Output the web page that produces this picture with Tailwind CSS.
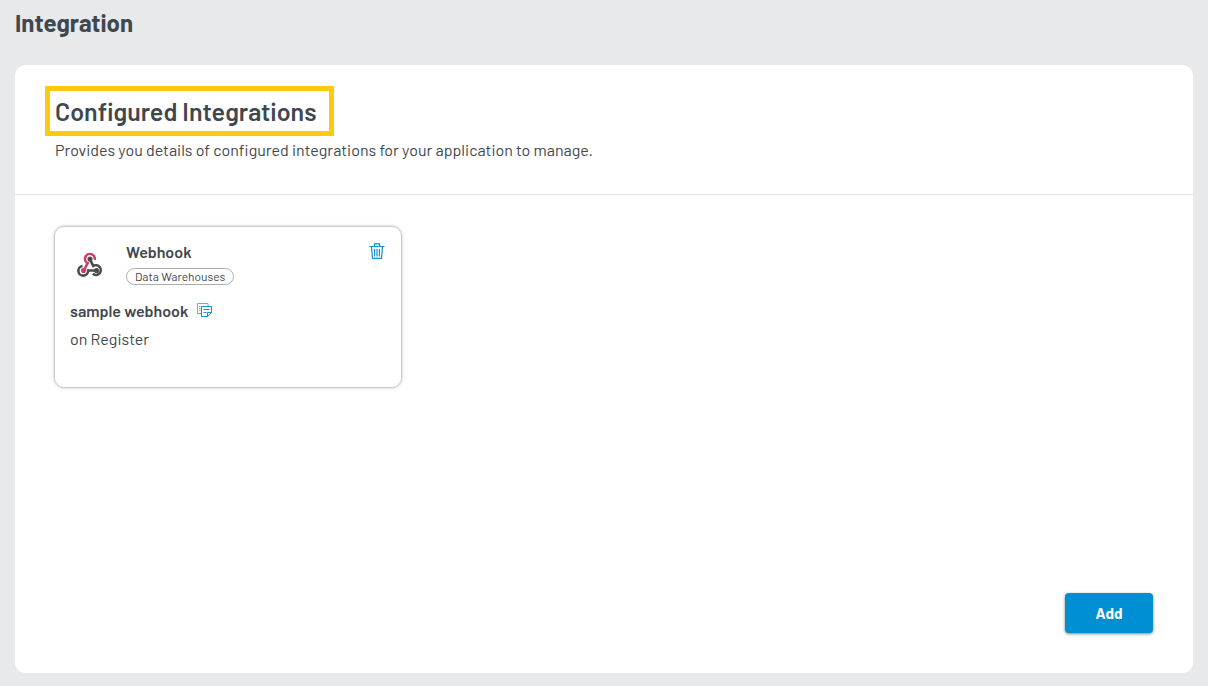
<!DOCTYPE html>
<html lang="en">
<head>
<meta charset="utf-8">
<meta name="viewport" content="width=device-width, initial-scale=1">
<title>Integration</title>
<script src="https://cdn.jsdelivr.net/npm/@tailwindcss/browser@4"></script>
</head>
<body class="flex min-h-screen flex-col bg-[#e7e9eb] px-[15px] pb-[13px] font-['Barlow','Roboto',sans-serif] text-[#3f484e]">
  <header class="pt-[7px] pb-[26px]">
    <h1 class="text-2xl font-bold">Integration</h1>
  </header>
  <main class="flex flex-1 flex-col rounded-[10px] bg-white">
    <section class="border-b border-[#e4e6e8] px-[30px] pt-[21px] pb-8">
      <h2 class="w-fit border-5 border-[#ffc90e] py-1 pr-3 pl-[5px] text-[25px] leading-8 font-semibold">Configured Integrations</h2>
      <p class="mt-[2px] pl-[10px] text-base leading-6">Provides you details of configured integrations for your application to manage.</p>
    </section>
    <section class="flex flex-1 flex-col justify-between px-10 pt-[31px] pb-10">
      <article class="-ml-px min-h-[162px] w-full max-w-[348px] rounded-[10px] border border-[#c9cccf] px-[15px] pt-[13px] shadow-[0_0_3px_rgba(0,0,0,0.25)]">
        <div class="flex items-start">
          <svg class="mt-3 ml-[7px] h-[26px] w-[26px] shrink-0" viewBox="-1 -2 56 54" fill="none" stroke-width="5.500" aria-hidden="true">
            <path d="M14 36 22 21A10.500 10.500 0 1 1 37 14" stroke="#cd3d68"/>
            <path d="M27 13 34 27A10.500 10.500 0 1 1 33 44" stroke="#4b4b4b"/>
            <path d="M41 37H23A10.500 10.500 0 1 1 11 27" stroke="#4b4b4b"/>
            <circle cx="13" cy="37" r="5.500" fill="#cd3d68"/>
            <circle cx="27" cy="12" r="5.500" fill="#4b4b4b"/>
            <circle cx="41" cy="37" r="5.500" fill="#4b4b4b"/>
          </svg>
          <div class="ml-[23px] flex-1">
            <h3 class="text-base leading-6 font-semibold">Webhook</h3>
            <span class="mt-[4px] block w-fit rounded-full border border-[#a9adb0] px-2 text-xs leading-[15px]">Data Warehouses</span>
          </div>
          <button type="button" aria-label="Delete webhook" class="mt-[3px] mr-px text-[#168fcb]">
            <svg class="h-4 w-4" viewBox="0 0 16 16" fill="none" stroke="currentColor" stroke-width="1.200">
              <path d="M.5 3.500h15M5.500 3V.8h5V3M2.500 4l1 11.300h9l1-11.300M5.600 6v7.500M8 6v7.500M10.400 6v7.500"/>
            </svg>
          </button>
        </div>
        <div class="mt-[14px] flex items-center gap-[9px]">
          <h4 class="text-base leading-6 font-semibold">sample webhook</h4>
          <button type="button" aria-label="Copy sample webhook" class="text-[#168fcb]">
            <svg class="-mt-[3px] h-[14px] w-[15px]" viewBox="0 0 15 14" fill="none" stroke="currentColor">
              <path d="M4 10.500H.5V.5h10.500V3" stroke="#65afd9"/>
              <path d="M2 3.500h1.500M2 5.500h1.500M2 7.500h1.500" stroke="#65afd9"/>
              <path d="M4.500 3.500h10v6l-4 4h-6zM10.500 13.500v-4h4M6.500 6.500h6M6.500 9.500h3"/>
            </svg>
          </button>
        </div>
        <p class="mt-1 text-base leading-6">on Register</p>
      </article>
      <button type="button" class="h-10 w-[88px] self-end rounded-[4px] bg-[#008fd3] text-[15px] font-bold text-white shadow-[0_1px_3px_rgba(0,0,0,0.5)]">Add</button>
    </section>
  </main>
</body>
</html>
